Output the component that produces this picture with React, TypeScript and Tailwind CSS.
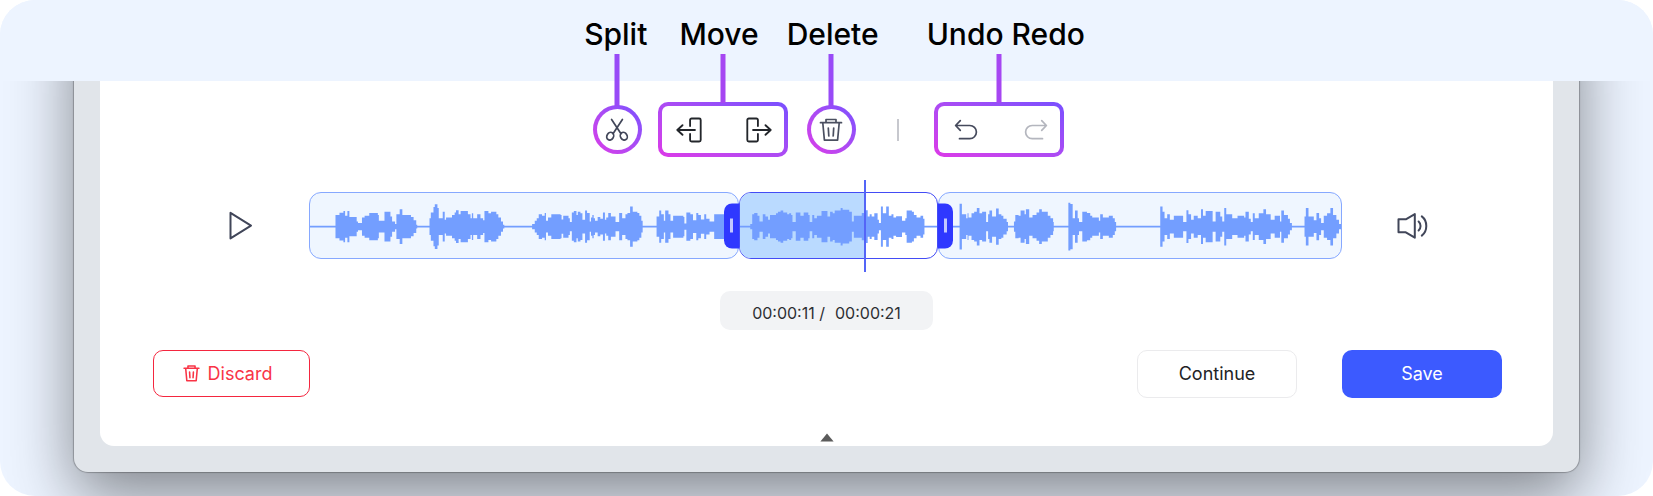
import type { ReactNode } from "react";

type Bar = [number, number];

const LEFT_WAVE: Bar[] = [
  [0, 3], [77, 36], [89, 43], [101, 48], [106, 34], [113, 48], [119, 30], [141, 16], [145, 11], [157, 28],
  [165, 34], [179, 42], [205, 36], [208, 18], [225, 46], [243, 31], [248, 16], [257, 8], [261, 38], [271, 54],
  [279, 36], [305, 30], [313, 20], [321, 6], [324, 3], [361, 26], [365, 44], [373, 61], [377, 69], [385, 58],
  [389, 26], [401, 46], [407, 21], [411, 28], [429, 36], [437, 44], [441, 51], [449, 38], [455, 48], [477, 38],
  [485, 26], [489, 41], [493, 26], [505, 38], [515, 26], [523, 20], [527, 48], [539, 41], [547, 46], [563, 38],
  [569, 28], [577, 16], [583, 6], [587, 3], [671, 8], [679, 18], [685, 26], [691, 38], [701, 34], [709, 42],
  [713, 18], [719, 28], [729, 38], [757, 36], [760, 22], [765, 34], [781, 26], [785, 14], [791, 44], [797, 48],
  [805, 36], [809, 46], [817, 41], [823, 21], [831, 50], [837, 42], [845, 16], [849, 28], [853, 36], [857, 26],
  [861, 18], [869, 30], [877, 24], [885, 44], [891, 21], [895, 28], [901, 42], [909, 31], [923, 14], [934, 42],
  [943, 26], [953, 38], [959, 42], [967, 62], [975, 46], [989, 42], [995, 34], [1001, 18], [1005, 3], [1047, 31],
  [1055, 50], [1061, 38], [1069, 18], [1073, 50], [1083, 38], [1089, 18], [1097, 34], [1128, 30], [1131, 10],
  [1137, 44], [1149, 38], [1157, 20], [1167, 42], [1173, 36], [1181, 22], [1191, 38], [1197, 24], [1207, 16],
  [1221, 38], [1293, 0],
];

const MIDDLE_WAVE: Bar[] = [
  [0, 3], [31, 8], [37, 38], [43, 42], [53, 34], [59, 16], [69, 38], [77, 31], [85, 21], [91, 36], [109, 41],
  [115, 46], [123, 50], [131, 44], [143, 38], [149, 41], [155, 36], [159, 14], [169, 44], [183, 34], [193, 44],
  [207, 36], [211, 14], [219, 36], [225, 26], [233, 34], [247, 48], [265, 31], [273, 46], [281, 41], [287, 50],
  [305, 58], [311, 52], [331, 46], [339, 16], [345, 34], [369, 42], [379, 51], [387, 31], [393, 38], [399, 31],
  [407, 41], [417, 21], [421, 11], [427, 62], [433, 41], [443, 62], [451, 34], [459, 38], [465, 28], [473, 32],
  [491, 18], [501, 26], [505, 50], [521, 46], [527, 36], [535, 28], [547, 34], [555, 24], [559, 3], [597, 0],
];

const RIGHT_WAVE: Bar[] = [
  [0, 3], [62, 71], [69, 38], [82, 26], [86, 41], [89, 28], [98, 41], [106, 46], [114, 58], [122, 41], [130, 46],
  [142, 14], [148, 38], [152, 50], [160, 31], [172, 56], [180, 38], [188, 34], [194, 24], [204, 14], [208, 3],
  [226, 16], [230, 36], [240, 34], [246, 50], [258, 38], [262, 54], [272, 28], [282, 36], [294, 44], [302, 54],
  [310, 46], [328, 34], [336, 26], [344, 14], [346, 3], [390, 74], [396, 70], [403, 26], [410, 50], [418, 26],
  [422, 14], [432, 46], [446, 42], [456, 34], [462, 28], [482, 18], [486, 38], [494, 28], [512, 34], [524, 26],
  [530, 14], [534, 3], [667, 62], [674, 46], [680, 26], [688, 38], [696, 21], [708, 34], [736, 14], [746, 51],
  [752, 38], [760, 21], [768, 34], [780, 26], [790, 54], [796, 34], [804, 48], [825, 16], [834, 46], [848, 31],
  [854, 16], [860, 58], [866, 38], [884, 26], [900, 34], [920, 28], [924, 46], [934, 24], [940, 14], [946, 41],
  [952, 26], [964, 41], [978, 54], [986, 38], [1000, 21], [1012, 34], [1028, 16], [1032, 50], [1040, 36],
  [1052, 24], [1058, 11], [1064, 3], [1102, 31], [1106, 58], [1114, 31], [1130, 20], [1138, 42], [1146, 26],
  [1152, 11], [1160, 34], [1170, 41], [1180, 58], [1188, 36], [1198, 21], [1206, 8], [1212, 0],
];

function Wave({ bars, width }: { bars: Bar[]; width: number }) {
  const mid = 104;
  const shape = bars
    .slice(0, -1)
    .map(([x, amp], i) => `M${x} ${mid - amp}H${bars[i + 1][0]}V${mid + amp}H${x}Z`)
    .join("");
  return (
    <svg viewBox={`0 0 ${width} 201`} preserveAspectRatio="none" className="relative block h-full w-full" aria-hidden="true">
      <path d={shape} fill="#739eff" />
    </svg>
  );
}

function Icon({ className, weight = 1.7, children }: { className: string; weight?: number; children: ReactNode }) {
  return (
    <svg
      viewBox="0 0 24 24"
      fill="none"
      stroke="currentColor"
      strokeWidth={weight}
      strokeLinecap="round"
      strokeLinejoin="round"
      className={className}
      aria-hidden="true"
    >
      {children}
    </svg>
  );
}

function Trash({ className, weight }: { className: string; weight?: number }) {
  return (
    <Icon className={className} weight={weight}>
      <path d="M1.5 4.7h21M7 4.5V1.5h10v3M3.8 5l1.6 17.2h13.2L20.2 5M9.3 10l.5 8M14.7 10l-.5 8" />
    </Icon>
  );
}

function Ring({ children }: { children: ReactNode }) {
  return (
    <div className="relative rounded-full bg-linear-to-tr from-[#dc38e8] to-[#784fff] p-1">
      <span className="absolute bottom-full left-1/2 z-20 -mb-px h-[52px] w-[5px] -translate-x-1/2 bg-[#984af7]" />
      <div className="flex size-[41px] items-center justify-center rounded-full bg-white">{children}</div>
    </div>
  );
}

function Box({ children }: { children: ReactNode }) {
  return (
    <div className="relative rounded-[10px] bg-linear-to-tr from-[#dc38e8] to-[#784fff] p-1">
      <span className="absolute bottom-full left-1/2 z-20 -mb-px h-[49px] w-[5px] -translate-x-1/2 bg-[#a646f2]" />
      <div className="flex h-[47px] w-[122px] items-center justify-between rounded-md bg-white pr-3 pl-3.5">{children}</div>
    </div>
  );
}

function Handle({ side }: { side: "left" | "right" }) {
  return (
    <span
      className={
        side === "left"
          ? "absolute top-1/2 right-full z-10 flex h-[45px] w-[15px] -translate-y-1/2 items-center justify-center rounded-l-lg bg-[#2f38ff]"
          : "absolute top-1/2 left-full z-10 flex h-[45px] w-[15px] -translate-y-1/2 items-center justify-center rounded-r-lg bg-[#2f38ff]"
      }
    >
      <span className="h-3.5 w-[3px] bg-[#c3c7ff]" />
    </span>
  );
}

export default function App() {
  return (
    <main className="overflow-hidden rounded-[35px] bg-[#edf4ff] font-['Inter',sans-serif]">
      <header className="relative z-10 flex h-[81px] justify-center bg-[#edf4ff] pt-4 pl-4 text-[30px] leading-9 font-medium text-black">
        <span className="mr-8">Split</span>
        <span className="mr-7">Move</span>
        <span className="mr-12">Delete</span>
        <span>Undo Redo</span>
      </header>

      <div className="mx-[74px] -mt-20 mb-6 rounded-[14px] bg-[#e1e5ea] px-[26px] pt-20 pb-[26px] shadow-[0_0_1px_1px_rgba(0,0,0,0.25),0_24px_64px_rgba(0,0,0,0.45)]">
        <section className="flex flex-col rounded-b-[14px] bg-white pt-[21px]">
          <div className="flex h-[55px] items-center justify-center pl-[3px]">
            <Ring>
              <button type="button" aria-label="Split" className="text-[#414659]">
                <Icon className="size-6">
                  <path d="M6.6 1.5L16 15.7M17.4 1.5L8 15.7" />
                  <ellipse cx="5.2" cy="18.2" rx="3.3" ry="4" transform="rotate(32 5.2 18.2)" />
                  <ellipse cx="18.8" cy="18.2" rx="3.3" ry="4" transform="rotate(-32 18.8 18.2)" />
                </Icon>
              </button>
            </Ring>
            <div className="ml-4">
              <Box>
                <button type="button" aria-label="Move left" className="text-[#23262b]">
                  <Icon className="size-[26px]">
                    <path d="M1.2 12h16.3M6 7.6L1.2 12 6 16.4M13 8.3V2.8a1.4 1.4 0 0 1 1.4-1.4h7a1.4 1.4 0 0 1 1.4 1.4v18.4a1.4 1.4 0 0 1-1.4 1.4h-7a1.4 1.4 0 0 1-1.4-1.4v-5.5" />
                  </Icon>
                </button>
                <button type="button" aria-label="Move right" className="text-[#23262b]">
                  <Icon className="size-[26px]">
                    <path d="M22.8 12H6.5M18 7.6l4.8 4.4-4.8 4.4M11 8.3V2.8a1.4 1.4 0 0 0-1.4-1.4h-7a1.4 1.4 0 0 0-1.4 1.4v18.4a1.4 1.4 0 0 0 1.4 1.4h7a1.4 1.4 0 0 0 1.4-1.4v-5.5" />
                  </Icon>
                </button>
              </Box>
            </div>
            <div className="ml-[19px]">
              <Ring>
                <button type="button" aria-label="Delete" className="text-[#4a4f60]">
                  <Trash className="size-6" />
                </button>
              </Ring>
            </div>
            <span className="mr-[35px] ml-[41px] h-[22px] w-0.5 bg-[#c7c8ce]" />
            <Box>
              <button type="button" aria-label="Undo" className="pl-0.5 text-[#454a5c]">
                <Icon className="size-6">
                  <path d="M6.3 2.6L1.6 7.5l4.7 4.9M1.8 7.5h14a6.6 6.6 0 0 1 0 13.2H5.5" />
                </Icon>
              </button>
              <button type="button" aria-label="Redo" disabled className="text-[#b4b6be]">
                <Icon className="size-6">
                  <path d="M17.7 2.6l4.7 4.9-4.7 4.9M22.2 7.5h-14a6.6 6.6 0 0 0 0 13.2h10.3" />
                </Icon>
              </button>
            </Box>
          </div>

          <div className="mt-[35px] flex items-center pr-[123px] pl-[128px]">
            <button type="button" aria-label="Play" className="mr-[55px] shrink-0 text-[#414659]">
              <svg viewBox="0 0 26 32" className="h-8 w-[26px]" fill="none" stroke="currentColor" strokeWidth="2" strokeLinejoin="round" aria-hidden="true">
                <path d="M2.5 2.8v25.6L23 15.6z" />
              </svg>
            </button>
            <div className="grid h-[67px] min-w-0 flex-1 grid-cols-[430fr_199fr_404fr] grid-rows-[67px]">
              <div className="min-w-0 overflow-hidden rounded-xl border border-[#86a8ff] bg-[#eff6ff]">
                <Wave bars={LEFT_WAVE} width={1293} />
              </div>
              <div className="relative min-w-0">
                <Handle side="left" />
                <div className="relative h-full overflow-hidden rounded-xl border border-[#434cf5] bg-white">
                  <span className="absolute inset-y-0 left-0 w-[64%] bg-[#badaff]" />
                  <Wave bars={MIDDLE_WAVE} width={597} />
                </div>
                <Handle side="right" />
                <span className="absolute -top-3 -bottom-[13px] left-[63%] w-0.5 bg-[#5465f7]" />
              </div>
              <div className="min-w-0 overflow-hidden rounded-xl border border-[#86a8ff] bg-[#eff6ff]">
                <Wave bars={RIGHT_WAVE} width={1212} />
              </div>
            </div>
            <button type="button" aria-label="Volume" className="ml-[54px] shrink-0 text-[#414659]">
              <svg viewBox="0 0 34 32" className="h-8 w-[34px]" fill="none" stroke="currentColor" strokeWidth="2" strokeLinecap="round" strokeLinejoin="round" aria-hidden="true">
                <path d="M2.5 9.3h7.3l9-5.2v23.6l-9-5.4H2.5z" />
                <path d="M22.6 11.5c2.6 2.4 2.6 6.6 0 9" />
                <path d="M25.8 6.4c6 4.6 6 14.6 0 19.2" />
              </svg>
            </button>
          </div>

          <p className="mt-8 flex h-[39px] w-[213px] items-center justify-center gap-2.5 self-center rounded-[10px] bg-[#f2f3f5] pt-1 text-base text-[#2d2f33]">
            <span>00:00:11 /</span>
            <span>00:00:21</span>
          </p>

          <div className="mt-5 flex items-start pr-[51px] pl-[53px] text-[18px] leading-6">
            <button type="button" className="flex h-[47px] w-[157px] items-center justify-center gap-2 rounded-[10px] border border-[#f4263f] pr-2 text-[#f93446]">
              <Trash className="size-[17px]" weight={2.2} />
              Discard
            </button>
            <button type="button" className="mr-[45px] ml-auto h-12 w-[160px] rounded-[10px] border border-[#ebebed] text-[#222326]">
              Continue
            </button>
            <button type="button" className="h-12 w-[160px] rounded-[10px] bg-[#3c5aff] text-white">
              Save
            </button>
          </div>

          <svg viewBox="0 0 14 9" className="mt-[35px] mb-1 h-[9px] w-3.5 self-center" aria-hidden="true">
            <path d="M7 .4L13.6 8.6H.4z" fill="#5b5b5b" />
          </svg>
        </section>
      </div>
    </main>
  );
}
